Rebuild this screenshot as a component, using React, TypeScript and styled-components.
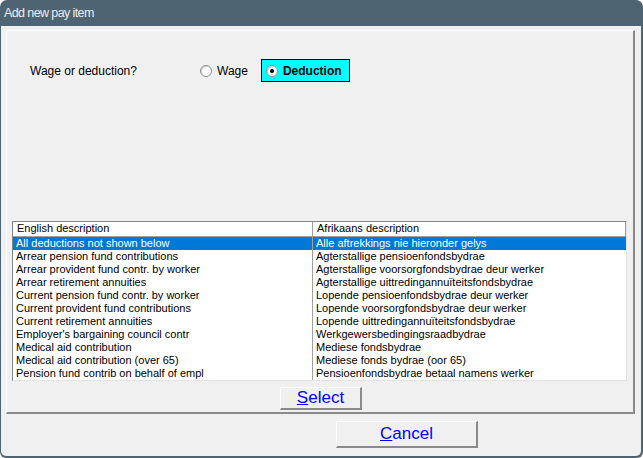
import React, { useState } from 'react';
import styled, { createGlobalStyle } from 'styled-components';

const GlobalStyle = createGlobalStyle`
  html, body {
    margin: 0;
    padding: 0;
    background: #ffffff;
  }
  * {
    box-sizing: border-box;
  }
`;

const Window = styled.div`
  width: 643px;
  height: 458px;
  background: #4f6472;
  border-radius: 7px 7px 6px 6px;
  display: flex;
  flex-direction: column;
  overflow: hidden;
  font-family: 'Liberation Sans', Arial, sans-serif;
`;

const TitleBar = styled.div`
  height: 26px;
  flex: none;
  display: flex;
  align-items: center;
  padding-left: 4px;
  color: #e8edf0;
  font-family: 'Liberation Sans', Arial, sans-serif;
  font-size: 12.5px;
  letter-spacing: -0.6px;
`;

const Body = styled.div`
  flex: 1;
  margin: 0 2px 2px 1px;
  background: #f0f0f0;
  border-radius: 0 0 5px 5px;
  display: flex;
  flex-direction: column;
  padding: 4px 6px 0 5px;
`;

const Panel = styled.div`
  height: 384px;
  border-top: 1px solid #ffffff;
  border-left: 1px solid #ffffff;
  border-right: 2px solid #8a8a8a;
  border-bottom: 2px solid #8a8a8a;
  display: flex;
  flex-direction: column;
  padding: 28px 5px 0 5px;
`;

const ChoiceRow = styled.div`
  height: 23px;
  display: flex;
  align-items: center;
`;

const Question = styled.div`
  font-size: 12px;
  color: #000;
  padding-left: 18px;
  width: 188px;
`;

const RadioOption = styled.label<{ $boxed: boolean }>`
  display: flex;
  align-items: center;
  gap: 5px;
  height: 23px;
  font-size: 12px;
  color: #000;
  cursor: pointer;
  ${({ $boxed }) =>
    $boxed
      ? `
    background: #00ffff;
    border: 1px solid #000;
    width: 89px;
    padding-left: 4px;
    font-weight: bold;
    margin-left: 13px;
  `
      : `
    padding-left: 0;
  `}
`;

const RadioCircle = styled.span<{ $on: boolean }>`
  width: 12px;
  height: 12px;
  border-radius: 50%;
  background: #ffffff;
  border: 1px solid #8e8e8e;
  box-shadow: inset 1px 1px 0 #d0d0d0;
  display: flex;
  align-items: center;
  justify-content: center;
  &::after {
    content: '';
    width: 4px;
    height: 4px;
    border-radius: 50%;
    background: ${({ $on }) => ($on ? '#000' : 'transparent')};
  }
`;

const List = styled.div`
  margin-top: 139px;
  width: 615px;
  height: 160px;
  background: #ffffff;
  border-top: 1px solid #828282;
  border-left: 1px solid #828282;
  border-right: 1px solid #e3e3e3;
  border-bottom: 1px solid #e3e3e3;
  font-size: 11px;
  color: #000;
`;

const HeaderRow = styled.div`
  display: grid;
  grid-template-columns: 300px 1fr;
  height: 15px;
  border-bottom: 1px solid #a0a0a0;
  background: #f0f0f0;
`;

const HeaderCell = styled.div`
  border-left: 1px solid #ffffff;
  border-right: 1px solid #a0a0a0;
  padding-left: 3px;
  line-height: 13px;
  background: #ffffff;
`;

const Row = styled.div<{ $selected: boolean }>`
  display: grid;
  grid-template-columns: 300px 1fr;
  height: 13px;
  line-height: 13px;
  background: ${({ $selected }) => ($selected ? '#0078d7' : '#ffffff')};
  color: ${({ $selected }) => ($selected ? '#ffffff' : '#000000')};
  cursor: default;
`;

const Cell = styled.div<{ $divider: boolean }>`
  padding-left: 3px;
  white-space: nowrap;
  overflow: hidden;
  border-right: ${({ $divider }) => ($divider ? '1px solid #a0a0a0' : 'none')};
`;

const ButtonRow = styled.div<{ $offset: number }>`
  display: flex;
  padding-left: ${({ $offset }) => $offset}px;
`;

const Button = styled.button<{ $w: number; $h: number }>`
  width: ${({ $w }) => $w}px;
  height: ${({ $h }) => $h}px;
  background: #f0f0f0;
  border: none;
  border-top: 1px solid #ffffff;
  border-left: 1px solid #ffffff;
  border-right: 2px solid #8a8a8a;
  border-bottom: 2px solid #8a8a8a;
  font-family: 'Liberation Sans', Arial, sans-serif;
  font-size: 17px;
  color: #0000ff;
  padding: 0;
  cursor: pointer;
  u {
    text-decoration: underline;
  }
`;

const rows: [string, string][] = [
  ['All deductions not shown below', 'Alle aftrekkings nie hieronder gelys'],
  ['Arrear pension fund contributions', 'Agterstallige pensioenfondsbydrae'],
  ['Arrear provident fund contr. by worker', 'Agterstallige voorsorgfondsbydrae deur werker'],
  ['Arrear retirement annuities', 'Agterstallige uittredingannuïteitsfondsbydrae'],
  ['Current pension fund contr. by worker', 'Lopende pensioenfondsbydrae deur werker'],
  ['Current provident fund contributions', 'Lopende voorsorgfondsbydrae deur werker'],
  ['Current retirement annuities', 'Lopende uittredingannuïteitsfondsbydrae'],
  ["Employer's bargaining council contr", 'Werkgewersbedingingsraadbydrae'],
  ['Medical aid contribution', 'Mediese fondsbydrae'],
  ['Medical aid contribution (over 65)', 'Mediese fonds bydrae (oor 65)'],
  ['Pension fund contrib on behalf of empl', 'Pensioenfondsbydrae betaal namens werker'],
];

export default function App() {
  const [kind, setKind] = useState<'wage' | 'deduction'>('deduction');
  const [selected, setSelected] = useState(0);

  return (
    <>
      <GlobalStyle />
      <Window>
        <TitleBar>Add new pay item</TitleBar>
        <Body>
          <Panel>
            <ChoiceRow>
              <Question>Wage or deduction?</Question>
              <RadioOption $boxed={false} onClick={() => setKind('wage')}>
                <RadioCircle $on={kind === 'wage'} />
                Wage
              </RadioOption>
              <RadioOption $boxed={true} onClick={() => setKind('deduction')}>
                <RadioCircle $on={kind === 'deduction'} />
                Deduction
              </RadioOption>
            </ChoiceRow>
            <List>
              <HeaderRow>
                <HeaderCell>English description</HeaderCell>
                <HeaderCell>Afrikaans description</HeaderCell>
              </HeaderRow>
              {rows.map((r, i) => (
                <Row key={i} $selected={i === selected} onClick={() => setSelected(i)}>
                  <Cell $divider={true}>{r[0]}</Cell>
                  <Cell $divider={false}>{r[1]}</Cell>
                </Row>
              ))}
            </List>
            <ButtonRow $offset={268} style={{ marginTop: 6 }}>
              <Button $w={82} $h={23}>
                <u>S</u>elect
              </Button>
            </ButtonRow>
          </Panel>
          <ButtonRow $offset={330} style={{ marginTop: 7 }}>
            <Button $w={142} $h={27}>
              <u>C</u>ancel
            </Button>
          </ButtonRow>
        </Body>
      </Window>
    </>
  );
}
